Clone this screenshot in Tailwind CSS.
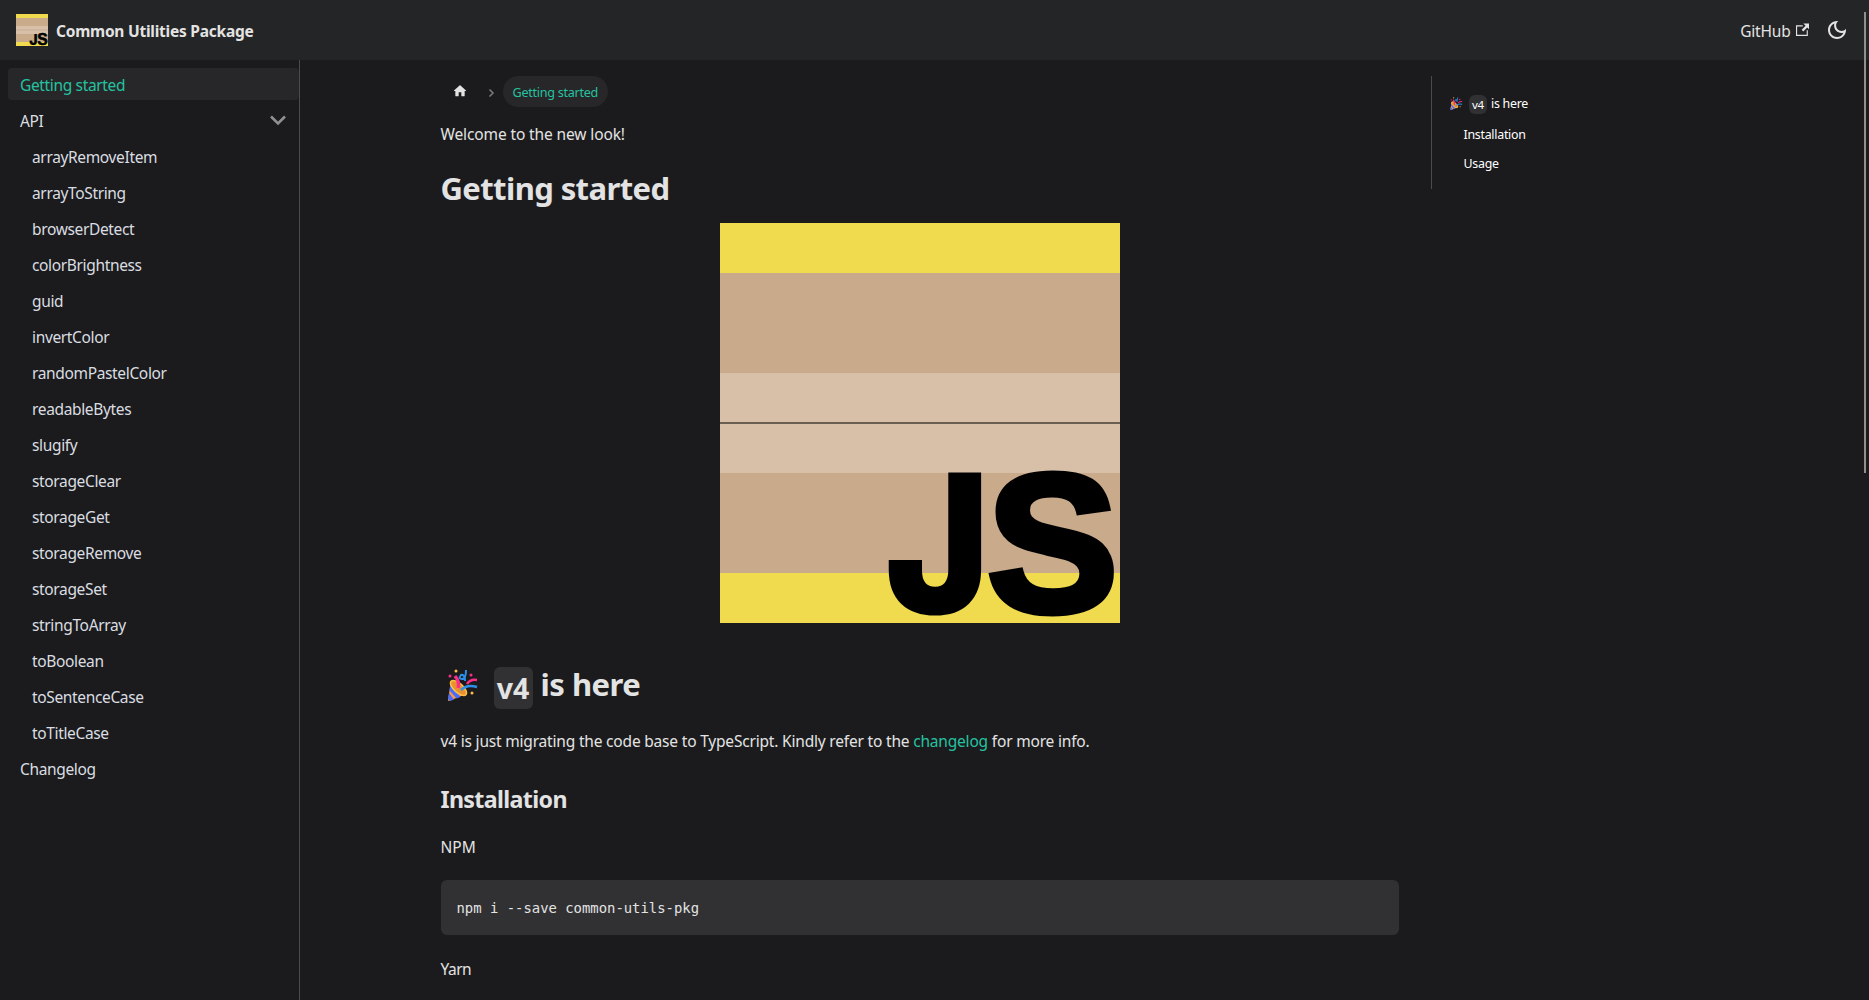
<!DOCTYPE html>
<html lang="en">
<head>
  <meta charset="UTF-8" />
  <title>Getting started | Common Utilities Package</title>
  <script src="https://cdn.jsdelivr.net/npm/@tailwindcss/browser@4"></script>
</head>
<body class="h-[1000px] overflow-hidden bg-[#1b1b1d] font-['Noto_Sans',sans-serif] text-[15.5px] text-[#e3e3e3]">

  <!-- Shared artwork -->
  <svg class="hidden">
    <symbol id="logo" viewBox="0 0 400 400">
      <rect width="400" height="400" fill="#f0db4f" />
      <rect y="50" width="400" height="300" fill="#c9aa8a" />
      <rect y="150" width="400" height="100" fill="#d7bfa8" />
      <rect y="199" width="400" height="2" fill="#6b5f54" />
      <g stroke="#000" font-weight="700">
        <text transform="translate(165.5 389) scale(.935 1)" font-family="Inter" font-weight="800" font-size="189" stroke-width="3">J</text>
        <text x="267" y="387.5" font-family="Liberation Sans" font-size="196.5" stroke-width="7">S</text>
      </g>
    </symbol>
    <symbol id="party" viewBox="0 0 32 32">
      <path d="M4 12 1 31q0 1 1 1l17-7Z" fill="#f79a4b" />
      <path d="m3.500 15 10 13-4 1.600-7-8Zm-1.500 9 5 6.500-4 1.500-2-2Z" fill="#4a6cf7" />
      <ellipse cx="11.500" cy="19" rx="4.500" ry="10" transform="rotate(-48 11.500 19)" fill="#e8912d" stroke="#fcc04a" stroke-width="1.500" />
      <path d="M11 19q2-6-3-12" fill="none" stroke="#f92f86" stroke-width="3.500" />
      <path d="M14 21q6-6 16-3" fill="none" stroke="#2e8fe8" stroke-width="2.500" />
      <path d="M20 15q3-5 10-4" fill="none" stroke="#f92f86" stroke-width="2.500" />
      <path d="M19 1q0 9-4 9t-1-4q4-1 4 6" fill="none" stroke="#2e8fe8" stroke-width="2" />
      <circle cx="9" cy="2" r="1.500" fill="#fcc04a" /><circle cx="3" cy="7" r="1.500" fill="#f92f86" />
      <circle cx="24" cy="6" r="1.500" fill="#f92f86" /><circle cx="25" cy="24" r="1.500" fill="#fcc04a" />
    </symbol>
  </svg>

  <!-- Navbar -->
  <nav class="flex h-[60px] items-center justify-between bg-[#242526] pr-5 pl-4">
    <a class="flex items-center gap-2">
      <svg class="size-8"><use href="#logo" /></svg>
      <b class="pt-[3px] tracking-[-0.24px]">Common Utilities Package</b>
    </a>
    <div class="flex items-center">
      <a class="flex items-center gap-[5px]"><span class="pt-[3px] tracking-[-0.2px]">GitHub</span>
        <svg class="size-[13.5px]" viewBox="0 0 24 24" fill="currentColor"><path d="M21 13v10h-21v-19h12v2h-10v15h17v-8h2zm3-12h-10.988l4.035 4-6.977 7.070 2.828 2.828 6.977-7.070 4.125 4.172v-11z" /></svg>
      </a>
      <svg class="ml-4 size-6" viewBox="0 0 24 24" fill="currentColor"><path d="M9.370 5.510c-.18.640-.27 1.310-.27 1.990 0 4.080 3.320 7.400 7.400 7.400.68 0 1.350-.09 1.990-.27C17.450 17.190 14.930 19 12 19c-3.860 0-7-3.140-7-7 0-2.930 1.810-5.450 4.370-6.490zM12 3c-4.970 0-9 4.030-9 9s4.030 9 9 9 9-4.030 9-9c0-.46-.04-.92-.1-1.360-.98 1.370-2.580 2.260-4.400 2.260-2.980 0-5.400-2.420-5.400-5.400 0-1.810.89-3.420 2.260-4.400C12.920 3.040 12.460 3 12 3z" /></svg>
    </div>
  </nav>

  <div class="flex h-[940px]">
    <!-- Sidebar -->
    <aside class="w-[300px] shrink-0 border-r border-[#4b4b4d] pt-2 pl-2 text-[#dadde1]">
      <ul class="flex flex-col gap-1 leading-5 tracking-[-0.35px] *:px-3 *:pt-[7px] *:pb-[5px]">
        <li class="rounded bg-[#272729] text-[#25c2a0]">Getting started</li>
        <li class="flex justify-between">API
          <svg class="-mr-px size-5" viewBox="0 0 20 20" fill="none" stroke="#909091" stroke-width="2.600"><path d="m3 5.500 7 7 7-7" /></svg>
        </li>
        <li class="ml-3">arrayRemoveItem</li>
        <li class="ml-3">arrayToString</li>
        <li class="ml-3">browserDetect</li>
        <li class="ml-3">colorBrightness</li>
        <li class="ml-3">guid</li>
        <li class="ml-3">invertColor</li>
        <li class="ml-3">randomPastelColor</li>
        <li class="ml-3">readableBytes</li>
        <li class="ml-3">slugify</li>
        <li class="ml-3">storageClear</li>
        <li class="ml-3">storageGet</li>
        <li class="ml-3">storageRemove</li>
        <li class="ml-3">storageSet</li>
        <li class="ml-3">stringToArray</li>
        <li class="ml-3">toBoolean</li>
        <li class="ml-3">toSentenceCase</li>
        <li class="ml-3">toTitleCase</li>
        <li>Changelog</li>
      </ul>
    </aside>

    <!-- Doc -->
    <main class="ml-[140.5px] w-[959px] shrink-0 pt-4">
      <div class="flex h-[31px] items-center text-[12.6px]">
        <svg class="-mt-0.5 ml-[11px] size-4" viewBox="0 0 24 24" fill="currentColor"><path d="M10 19v-5h4v5c0 .55.45 1 1 1h3c.55 0 1-.45 1-1v-7h1.700c.46 0 .68-.57.33-.87L12.670 3.600c-.38-.34-.96-.34-1.340 0l-8.360 7.530c-.34.300-.13.870.33.870H5v7c0 .55.450 1 1 1h3c.55 0 1-.45 1-1z" /></svg>
        <svg class="mt-0.5 ml-[19px] size-2.5" viewBox="0 0 10 10" fill="none" stroke="#7b7b7c" stroke-width="1.500"><path d="m2.500 1.500 3.500 3.500-3.500 3.500" /></svg>
        <span class="ml-[6px] flex h-full w-[105px] items-center rounded-full bg-[#272729] pt-[3px] pl-2.5 tracking-[-0.28px] whitespace-nowrap text-[#25c2a0]">Getting started</span>
      </div>
      <p class="mt-[15px] leading-6 tracking-[-0.12px]">Welcome to the new look!</p>
      <h1 class="mt-[22px] text-[31px] leading-10 font-bold tracking-[-0.6px]">Getting started</h1>
      <svg class="mx-auto mt-[15px] size-[400px]"><use href="#logo" /></svg>
      <h2 class="mt-[42px] flex h-10 items-center text-[31px] font-bold">
        <svg class="ml-1.5 size-8"><use href="#party" /></svg>
        <code class="mt-1.5 ml-[15px] flex h-[42px] w-[39px] items-center justify-center rounded-md bg-[#313133] font-['Noto_Sans'] text-[28.5px]">v4</code>
        <span class="ml-2 pb-0.5 tracking-[-0.5px]">is here</span>
      </h2>
      <p class="mt-6 leading-6 tracking-[-0.19px]">v4 is just migrating the code base to TypeScript. Kindly refer to the <a class="text-[#25c2a0]">changelog</a> for more info.</p>
      <h3 class="mt-[31px] text-[23.2px] leading-[30px] font-bold tracking-[-0.63px]">Installation</h3>
      <p class="mt-[21px] leading-6">NPM</p>
      <pre class="mt-[21px] mr-px h-[55px] rounded-md bg-[#313133] px-4 pt-[17px] font-['DejaVu_Sans_Mono',monospace] text-[13.9px] leading-[23px]">npm i --save common-utils-pkg</pre>
      <p class="mt-[22px] leading-6 tracking-[-0.5px]">Yarn</p>
    </main>

    <!-- Table of contents -->
    <ul class="mt-4 ml-[31.5px] h-[113px] w-[300px] border-l border-[#4b4b4d] pt-4 pl-[18px] text-[12.4px] leading-5 tracking-[-0.27px] text-white">
      <li class="flex h-[23px] items-center"><svg class="size-[13px]"><use href="#party" /></svg>
        <code class="mt-0.5 ml-1.5 flex h-[19px] w-[18px] items-center justify-center rounded-md bg-[#313133] font-['Noto_Sans'] text-[11.5px]">v4</code>
        <span class="ml-1">is here</span></li>
      <li class="mt-2.5 ml-[13.5px]">Installation</li>
      <li class="mt-[9px] ml-[13.5px]">Usage</li>
    </ul>
  </div>

  <!-- Scrollbar thumb -->
  <div class="absolute top-3 left-[1864px] h-[461px] w-0.5 bg-[#8f8f8f]"></div>
</body>
</html>
